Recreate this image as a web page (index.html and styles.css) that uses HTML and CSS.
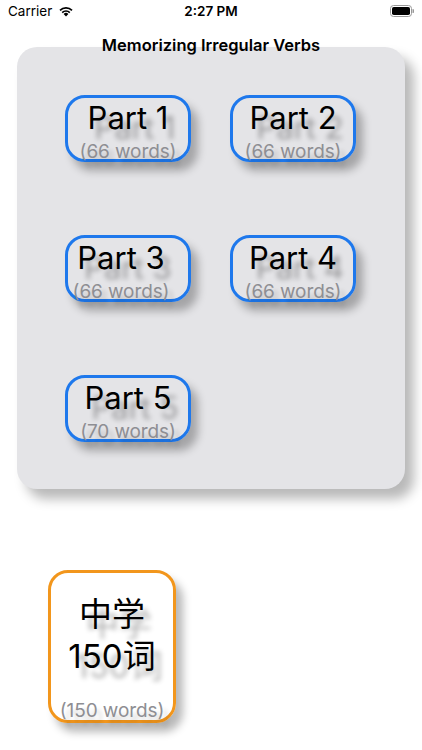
FILE: index.html
```html
<!DOCTYPE html>
<html>
<head>
<meta charset="utf-8">
<link rel="stylesheet" href="styles.css">
</head>
<body>
<div class="screen">
  <div class="status">
    <div class="status-left">
      <span class="carrier">Carrier</span>
      <svg class="wifi" width="16" height="12" viewBox="0 0 16 12">
        <path d="M8 11.5 L5.6 9 A3.4 3.4 0 0 1 10.4 9 Z" fill="#000"/>
        <path d="M3.6 7 A6.2 6.2 0 0 1 12.4 7 L11.2 8.2 A4.5 4.5 0 0 0 4.8 8.2 Z" fill="#000"/>
        <path d="M1.4 4.8 A9.3 9.3 0 0 1 14.6 4.8 L13.4 6 A7.6 7.6 0 0 0 2.6 6 Z" fill="#000"/>
      </svg>
    </div>
    <div class="time">2:27 PM</div>
    <div class="status-right">
      <svg width="24" height="12" viewBox="0 0 24 12">
        <rect x="0.5" y="0.5" width="21" height="11" rx="3" fill="none" stroke="#999" stroke-width="1"/>
        <rect x="2" y="2" width="18" height="8" rx="1.8" fill="#000"/>
        <path d="M22.5 4 A2 2 0 0 1 22.5 8 Z" fill="#999"/>
      </svg>
    </div>
  </div>
  <h1 class="title">Memorizing Irregular Verbs</h1>
  <div class="panel">
    <div class="grid">
      <button class="part"><span class="part-name">Part 1</span><span class="part-count">(66 words)</span></button>
      <button class="part"><span class="part-name">Part 2</span><span class="part-count">(66 words)</span></button>
      <button class="part part-shift"><span class="part-name">Part 3</span><span class="part-count">(66 words)</span></button>
      <button class="part"><span class="part-name">Part 4</span><span class="part-count">(66 words)</span></button>
      <button class="part"><span class="part-name">Part 5</span><span class="part-count">(70 words)</span></button>
    </div>
  </div>
  <button class="special">
    <span class="special-name">中学</span>
    <span class="special-name">150词</span>
    <span class="part-count">(150 words)</span>
  </button>
</div>
</body>
</html>
```
FILE: styles.css
```css
html, body {
  margin: 0;
  padding: 0;
  background: #ffffff;
}
body {
  font-family: Inter, "Liberation Sans", "Noto Sans CJK SC", sans-serif;
  color: #000;
}
.screen {
  width: 422px;
  height: 750px;
  overflow: hidden;
  display: flex;
  flex-direction: column;
}
.status {
  height: 22px;
  display: flex;
  align-items: center;
  justify-content: space-between;
  padding: 0 8px;
  font-size: 13.5px;
}
.status-left {
  display: flex;
  align-items: center;
  gap: 6px;
  width: 100px;
}
.time {
  font-weight: 600;
  font-size: 13.5px;
}
.status-right {
  width: 100px;
  display: flex;
  justify-content: flex-end;
}
.title {
  margin: 14px 0 0;
  font-size: 16.5px;
  font-weight: 600;
  text-align: center;
  line-height: 18px;
  position: relative;
  z-index: 1;
}
.panel {
  margin: -7px 0 0 17px;
  width: 388px;
  height: 442px;
  box-sizing: border-box;
  background: #e4e4e7;
  border-radius: 20px;
  box-shadow: 9px 10px 12px rgba(0, 0, 0, 0.28);
  padding: 48px 0 0 48px;
}
.grid {
  display: grid;
  grid-template-columns: 126px 126px;
  grid-auto-rows: 67px;
  column-gap: 39px;
  row-gap: 73px;
}
.part, .special {
  box-sizing: border-box;
  border: 3px solid #1e78ec;
  border-radius: 20px;
  background: transparent;
  box-shadow: 7px 9px 8px rgba(0, 0, 0, 0.28);
  display: flex;
  flex-direction: column;
  align-items: center;
  justify-content: flex-start;
  padding: 0;
  font-family: inherit;
  cursor: pointer;
}
.part-name {
  font-size: 31px;
  line-height: 34px;
  margin-top: 3px;
  color: #000;
  text-shadow: 7px 10px 5px rgba(0, 0, 0, 0.32);
}
.part-count {
  font-size: 19px;
  line-height: 22px;
  margin-top: 6px;
  color: #8e8e93;
  letter-spacing: -0.1px;
  text-shadow: 5px 7px 4px rgba(0, 0, 0, 0.18);
}
.part-shift .part-name, .part-shift .part-count {
  position: relative;
  left: -7px;
}
.special {
  margin: 81px 0 0 48px;
  width: 128px;
  height: 153px;
  border-color: #f2961c;
  padding: 20px 0 0;
}
.special-name {
  font-family: Inter, "Noto Sans CJK SC", sans-serif;
  font-size: 33px;
  line-height: 42px;
  color: #000;
  text-shadow: 7px 10px 5px rgba(0, 0, 0, 0.3);
}
.special .part-count {
  margin-top: auto;
  margin-bottom: -2px;
  font-family: Inter, "Liberation Sans", sans-serif;
}
```
